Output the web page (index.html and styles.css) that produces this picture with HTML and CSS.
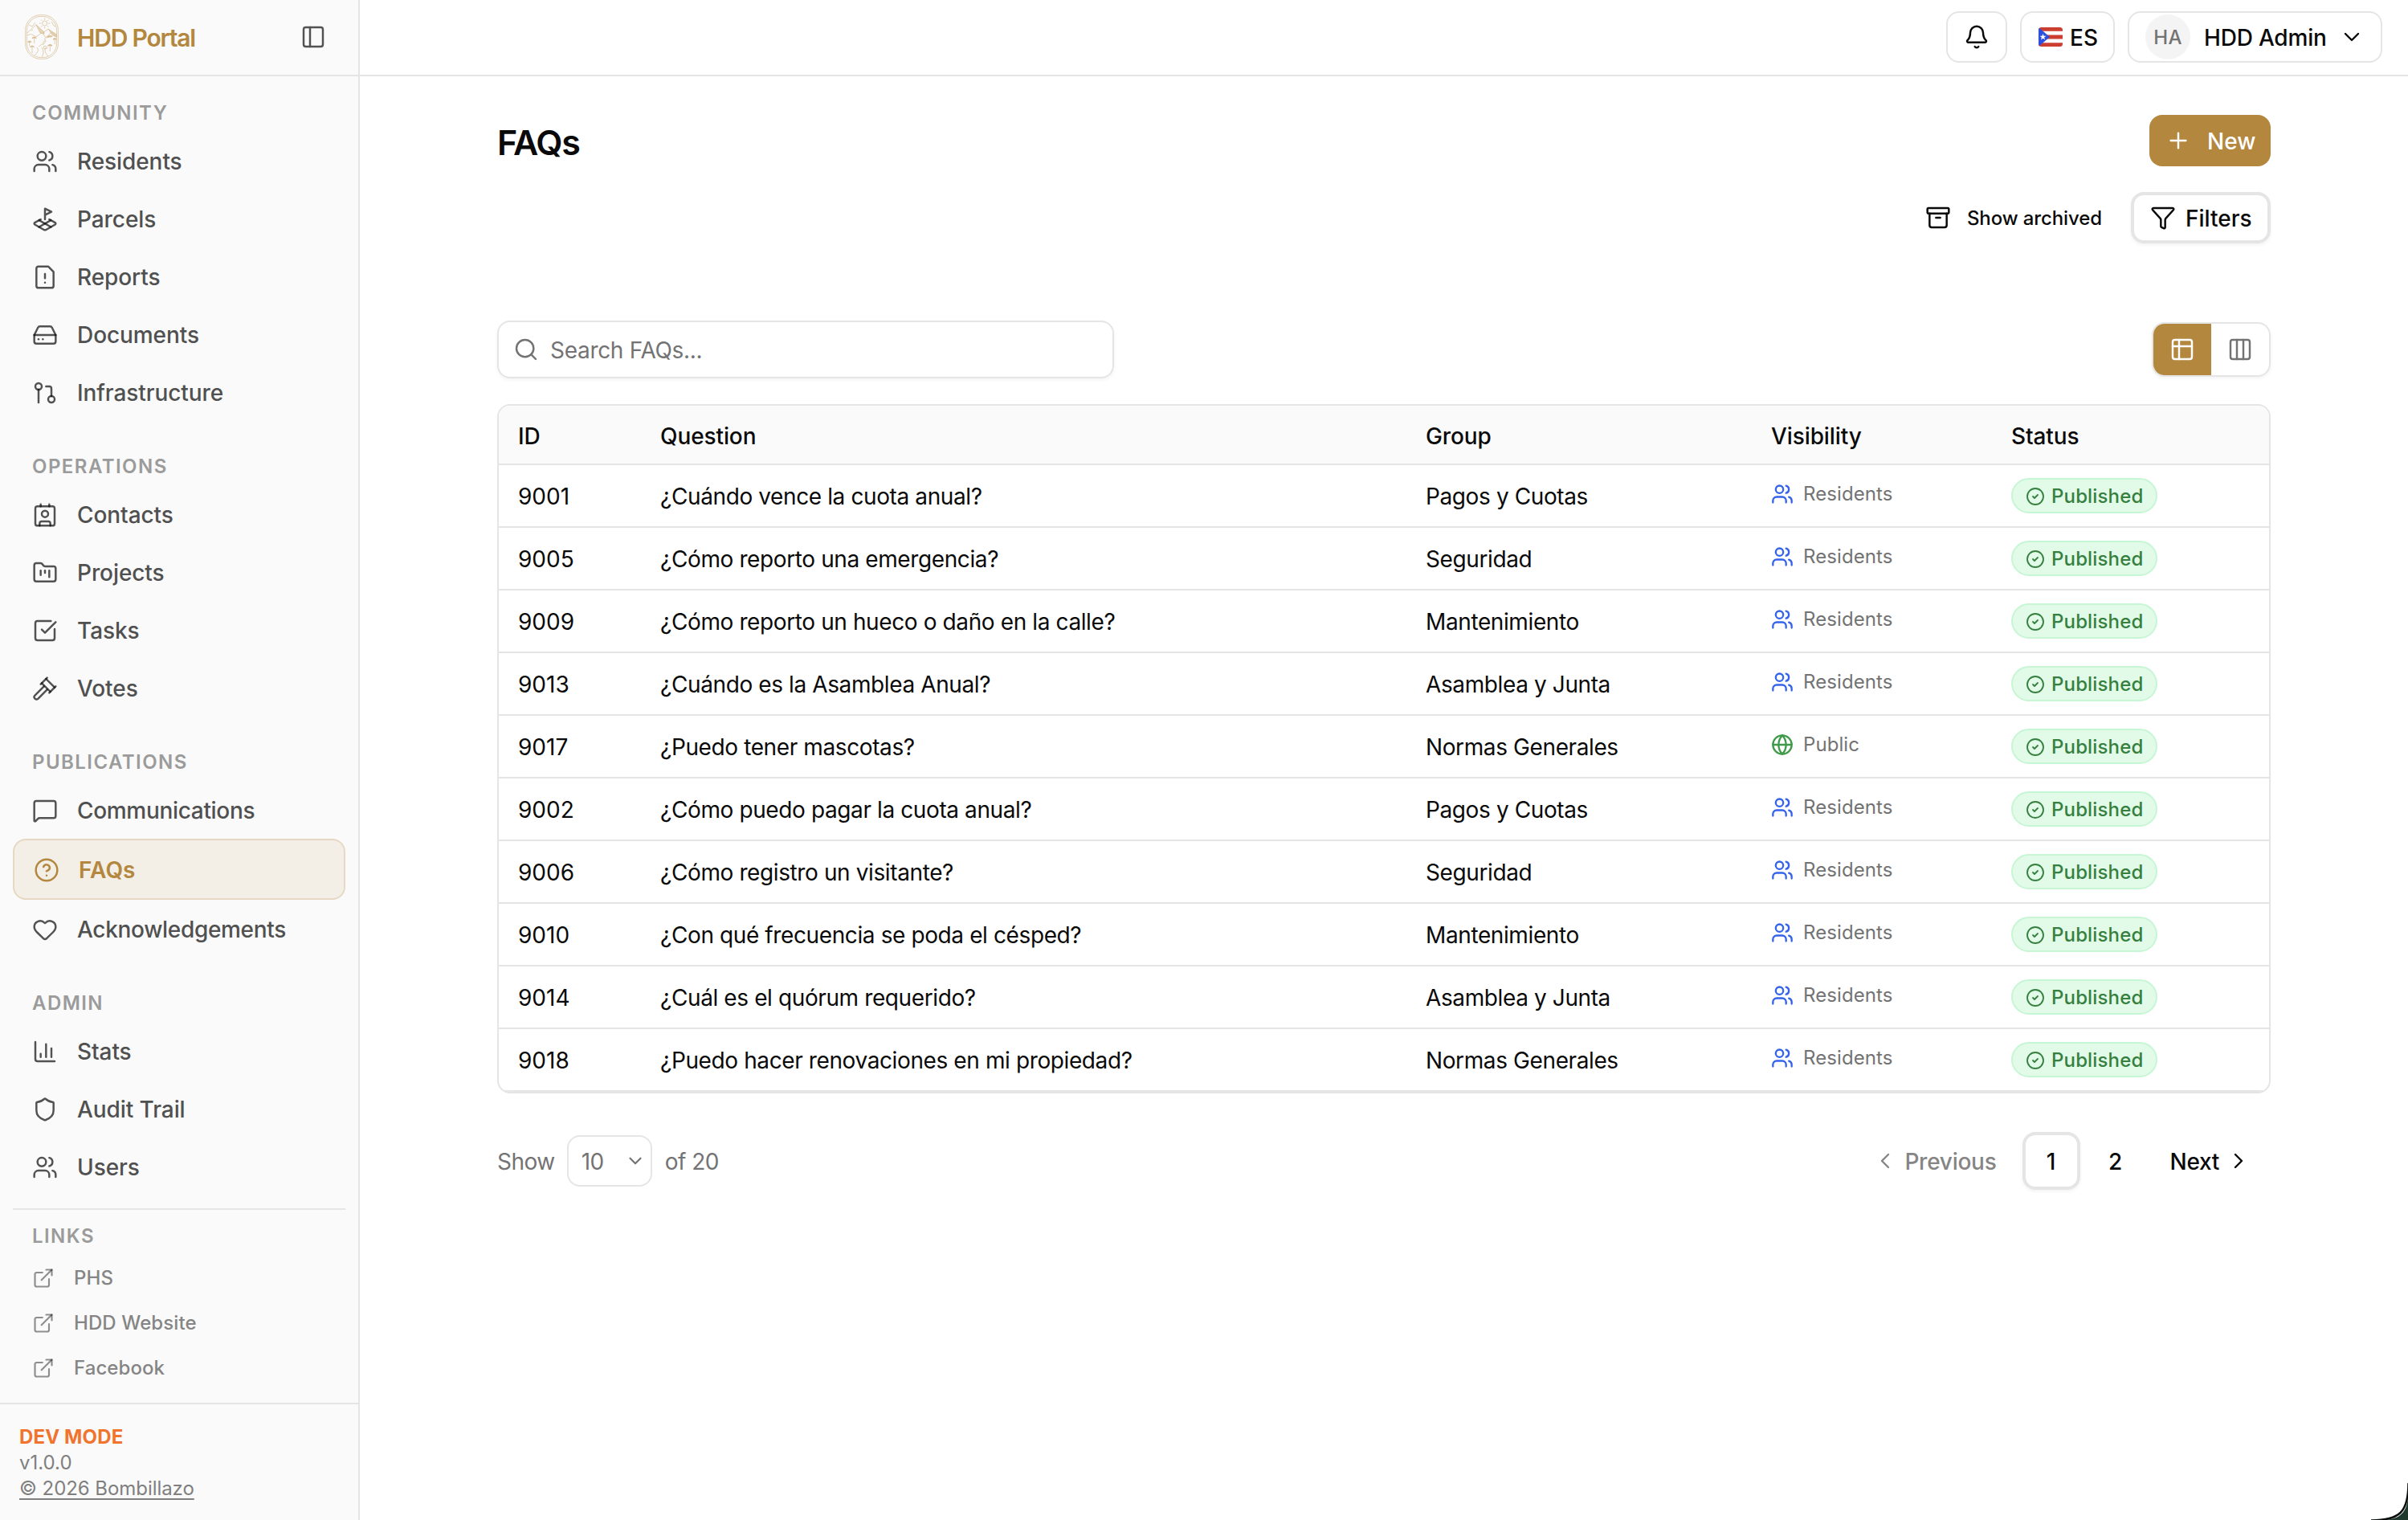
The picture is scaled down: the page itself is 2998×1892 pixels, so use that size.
FILE: index.html
```html
<!DOCTYPE html>
<html lang="en">
<head>
<meta charset="utf-8">
<title>FAQs</title>
<link rel="stylesheet" href="styles.css">
</head>
<body>
<svg class="sprite" aria-hidden="true">
  <symbol id="users" viewBox="0 0 24 24"><path d="M16 21v-2a4 4 0 0 0-4-4H6a4 4 0 0 0-4 4v2"/><circle cx="9" cy="7" r="4"/><path d="M22 21v-2a4 4 0 0 0-3-3.87"/><path d="M16 3.13a4 4 0 0 1 0 7.75"/></symbol>
  <symbol id="land" viewBox="0 0 24 24"><path d="m12 8 6-3-6-3v10"/><path d="m8 11.99-5.5 3.14a1 1 0 0 0 0 1.74l8.5 4.86a2 2 0 0 0 2 0l8.5-4.86a1 1 0 0 0 0-1.74L16 12"/><path d="m6.49 12.85 11.02 6.3"/><path d="M17.51 12.85 6.5 19.15"/></symbol>
  <symbol id="report" viewBox="0 0 24 24"><path d="M15 2H6a2 2 0 0 0-2 2v16a2 2 0 0 0 2 2h12a2 2 0 0 0 2-2V7Z"/><path d="M12 9v4"/><path d="M12 17h.01"/></symbol>
  <symbol id="drive" viewBox="0 0 24 24"><path d="M22 12H2"/><path d="M5.45 5.11 2 12v6a2 2 0 0 0 2 2h16a2 2 0 0 0 2-2v-6l-3.45-6.89A2 2 0 0 0 16.76 4H7.24a2 2 0 0 0-1.79 1.11z"/><path d="M6 16h.01"/><path d="M10 16h.01"/></symbol>
  <symbol id="infra" viewBox="0 0 24 24"><circle cx="18" cy="18" r="3"/><circle cx="6" cy="6" r="3"/><path d="M13 6h3a2 2 0 0 1 2 2v7"/><path d="M6 9v12"/></symbol>
  <symbol id="contact" viewBox="0 0 24 24"><path d="M16 2v2"/><path d="M7 22v-2a2 2 0 0 1 2-2h6a2 2 0 0 1 2 2v2"/><path d="M8 2v2"/><circle cx="12" cy="11" r="3"/><rect x="3" y="4" width="18" height="18" rx="2"/></symbol>
  <symbol id="kanban" viewBox="0 0 24 24"><path d="M4 20h16a2 2 0 0 0 2-2V8a2 2 0 0 0-2-2h-7.93a2 2 0 0 1-1.66-.9l-.82-1.2A2 2 0 0 0 7.93 3H4a2 2 0 0 0-2 2v13c0 1.1.9 2 2 2Z"/><path d="M8 10v4"/><path d="M12 10v2"/><path d="M16 10v6"/></symbol>
  <symbol id="task" viewBox="0 0 24 24"><path d="M21 10.5V19a2 2 0 0 1-2 2H5a2 2 0 0 1-2-2V5a2 2 0 0 1 2-2h12.5"/><path d="m9 11 3 3L22 4"/></symbol>
  <symbol id="gavel" viewBox="0 0 24 24"><path d="m14 13-8.38 8.38a1 1 0 0 1-3.01-3L11 9.99"/><path d="m16 16 6-6"/><path d="m8 8 6-6"/><path d="m9 7 8 8"/><path d="m21 11-8-8"/></symbol>
  <symbol id="message" viewBox="0 0 24 24"><path d="M22 17a2 2 0 0 1-2 2H6.828a2 2 0 0 0-1.414.586l-2.202 2.202A.71.71 0 0 1 2 21.286V5a2 2 0 0 1 2-2h16a2 2 0 0 1 2 2z"/></symbol>
  <symbol id="help" viewBox="0 0 24 24"><circle cx="12" cy="12" r="10"/><path d="M9.09 9a3 3 0 0 1 5.83 1c0 2-3 3-3 3"/><path d="M12 17h.01"/></symbol>
  <symbol id="heart" viewBox="0 0 24 24"><path d="M2 9.5a5.5 5.5 0 0 1 9.591-3.676.56.56 0 0 0 .818 0A5.49 5.49 0 0 1 22 9.5c0 2.29-1.5 4-3 5.5l-5.492 5.313a2 2 0 0 1-3 .019L5 15c-1.5-1.5-3-3.2-3-5.5"/></symbol>
  <symbol id="chart" viewBox="0 0 24 24"><path d="M3 3v16a2 2 0 0 0 2 2h16"/><path d="M18 17V9"/><path d="M13 17V5"/><path d="M8 17v-3"/></symbol>
  <symbol id="shield" viewBox="0 0 24 24"><path d="M20 13c0 5-3.5 7.5-7.66 8.95a1 1 0 0 1-.67-.01C7.5 20.5 4 18 4 13V6a1 1 0 0 1 1-1c2 0 4.5-1.2 6.24-2.72a1.17 1.17 0 0 1 1.52 0C14.51 3.81 17 5 19 5a1 1 0 0 1 1 1z"/></symbol>
  <symbol id="external" viewBox="0 0 24 24"><path d="M15 3h6v6"/><path d="M10 14 21 3"/><path d="M18 13v6a2 2 0 0 1-2 2H5a2 2 0 0 1-2-2V8a2 2 0 0 1 2-2h6"/></symbol>
  <symbol id="panel" viewBox="0 0 24 24"><rect x="3" y="3" width="18" height="18" rx="2"/><path d="M9 3v18"/></symbol>
  <symbol id="bell" viewBox="0 0 24 24"><path d="M10.268 21a2 2 0 0 0 3.464 0"/><path d="M3.262 15.326A1 1 0 0 0 4 17h16a1 1 0 0 0 .74-1.673C19.41 13.956 18 12.499 18 8A6 6 0 0 0 6 8c0 4.499-1.411 5.956-2.738 7.326"/></symbol>
  <symbol id="down" viewBox="0 0 24 24"><path d="m6 9 6 6 6-6"/></symbol>
  <symbol id="left" viewBox="0 0 24 24"><path d="m15 18-6-6 6-6"/></symbol>
  <symbol id="right" viewBox="0 0 24 24"><path d="m9 18 6-6-6-6"/></symbol>
  <symbol id="plus" viewBox="0 0 24 24"><path d="M5 12h14"/><path d="M12 5v14"/></symbol>
  <symbol id="archive" viewBox="0 0 24 24"><rect x="2" y="3" width="20" height="5" rx="1"/><path d="M4 8v11a2 2 0 0 0 2 2h12a2 2 0 0 0 2-2V8"/><path d="M10 12h4"/></symbol>
  <symbol id="funnel" viewBox="0 0 24 24"><path d="M10 20a1 1 0 0 0 .553.895l2 1A1 1 0 0 0 14 21v-7a2 2 0 0 1 .517-1.341L21.74 4.67A1 1 0 0 0 21 3H3a1 1 0 0 0-.742 1.67l7.225 7.989A2 2 0 0 1 10 14z"/></symbol>
  <symbol id="search" viewBox="0 0 24 24"><path d="m21 21-4.34-4.34"/><circle cx="11" cy="11" r="8"/></symbol>
  <symbol id="table" viewBox="0 0 24 24"><rect x="3" y="3" width="18" height="18" rx="2"/><path d="M3 9h18"/><path d="M9 3v18"/></symbol>
  <symbol id="columns" viewBox="0 0 24 24"><rect x="3" y="3" width="18" height="18" rx="2"/><path d="M9 3v18"/><path d="M15 3v18"/></symbol>
  <symbol id="globe" viewBox="0 0 24 24"><circle cx="12" cy="12" r="10"/><path d="M12 2a14.5 14.5 0 0 0 0 20 14.5 14.5 0 0 0 0-20"/><path d="M2 12h20"/></symbol>
  <symbol id="check" viewBox="0 0 24 24"><circle cx="12" cy="12" r="10"/><path d="m9 12 2 2 4-4"/></symbol>
</svg>

<div class="app">
  <aside class="sidebar">
    <div class="brand">
      <svg class="logo" viewBox="0 0 42 56">
        <rect x=".6" y=".6" width="40.8" height="54.8" rx="19"/><rect x="2.400" y="2.400" width="37.200" height="51.200" rx="17.500"/>
        <circle cx="24.700" cy="11" r="3"/>
        <path d="M24.700 4.500v2.500M24.700 15v2.500M18 11h2.500M29 11h2.500M20 6.500l1.700 1.700M29.500 6.500l-1.700 1.700M20 15.500l1.700-1.700M29.500 15.500l-1.700-1.700"/>
        <path class="shade" d="M14 12.700 24 22v2l-5-1-2-4z"/><path class="shade" d="M29 18 39.500 25v3l-5-2z"/>
        <path d="M3 23 14 12.700M22 23l7-5M5 13l4 2 4-5M33 9l3 5 2 1M8 20l2-1"/>
        <path d="M3 26q5-3 8 0t7-1 6 1 6-1 9 3M22 38q6-5 3-7t8-3M17 40q6-3 8-8M12 51q7-6 3-10M21 53q4-6 0-12M29 52q-6-6-3-11M23 40l3-1 2 3-4 1z"/>
        <path d="M11.700 29v7M5.700 34v5M9 40v8M31.300 38v8M37.300 30v7"/>
        <path class="palm" d="M9 29.500l2.700-1.200 2.700 1.200M3.700 34.500l2-1 2.300 1M6.500 40.500 9 39.300l2.500 1.200M28.500 39l2.800-1.300L34 39M35 31l2.300-1 2 1M28 28l3-1.500 3 1"/>
      </svg>
      <span class="brand-name">HDD Portal</span>
      <svg class="icon panel"><use href="#panel"/></svg>
    </div>
    <nav class="nav">
      <section class="group">
        <h2>COMMUNITY</h2>
        <a class="item"><svg class="icon"><use href="#users"/></svg>Residents</a>
        <a class="item"><svg class="icon"><use href="#land"/></svg>Parcels</a>
        <a class="item"><svg class="icon"><use href="#report"/></svg>Reports</a>
        <a class="item"><svg class="icon"><use href="#drive"/></svg>Documents</a>
        <a class="item"><svg class="icon"><use href="#infra"/></svg>Infrastructure</a>
      </section>
      <section class="group">
        <h2>OPERATIONS</h2>
        <a class="item"><svg class="icon"><use href="#contact"/></svg>Contacts</a>
        <a class="item"><svg class="icon"><use href="#kanban"/></svg>Projects</a>
        <a class="item"><svg class="icon"><use href="#task"/></svg>Tasks</a>
        <a class="item"><svg class="icon"><use href="#gavel"/></svg>Votes</a>
      </section>
      <section class="group">
        <h2>PUBLICATIONS</h2>
        <a class="item long"><svg class="icon"><use href="#message"/></svg>Communications</a>
        <a class="item active"><svg class="icon"><use href="#help"/></svg>FAQs</a>
        <a class="item long"><svg class="icon"><use href="#heart"/></svg>Acknowledgements</a>
      </section>
      <section class="group">
        <h2>ADMIN</h2>
        <a class="item"><svg class="icon"><use href="#chart"/></svg>Stats</a>
        <a class="item"><svg class="icon"><use href="#shield"/></svg>Audit Trail</a>
        <a class="item"><svg class="icon"><use href="#users"/></svg>Users</a>
      </section>
    </nav>
    <section class="links">
      <h2>LINKS</h2>
      <a class="link"><svg class="icon"><use href="#external"/></svg>PHS</a>
      <a class="link"><svg class="icon"><use href="#external"/></svg>HDD Website</a>
      <a class="link"><svg class="icon"><use href="#external"/></svg>Facebook</a>
    </section>
    <footer class="foot">
      <strong>DEV MODE</strong>
      <span>v1.0.0</span>
      <a>© 2026 Bombillazo</a>
    </footer>
  </aside>

  <div class="page">
    <header class="topbar">
      <button class="btn bell"><svg class="icon"><use href="#bell"/></svg></button>
      <button class="btn lang">
        <svg class="flag" viewBox="0 0 30 24"><clipPath id="fc"><rect width="30" height="24" rx="3.500"/></clipPath><g clip-path="url(#fc)"><path fill="#fff" d="M0 0h30v24H0z"/><path fill="#cc3f30" d="M0 0h30v4.800H0zM0 9.600h30v4.800H0zM0 19.200h30V24H0z"/><path fill="#2b4fe0" d="M0 0 14 12 0 24z"/><path fill="#fff" d="m5.500 8 1 2.800h3l-2.400 1.800.9 2.900-2.500-1.700L3 15.500l.9-2.900-2.400-1.800h3z"/></g></svg>
        <span>ES</span>
      </button>
      <button class="btn user"><span class="avatar">HA</span><span class="name">HDD Admin</span><svg class="icon"><use href="#down"/></svg></button>
    </header>
    <main class="content">
      <div class="title-row">
        <h1>FAQs</h1>
        <button class="new"><svg class="icon"><use href="#plus"/></svg><span>New</span></button>
      </div>
      <div class="actions">
        <button class="archived"><svg class="icon"><use href="#archive"/></svg><span>Show archived</span></button>
        <button class="filters"><svg class="icon"><use href="#funnel"/></svg><span>Filters</span></button>
      </div>
      <div class="tools">
        <div class="search"><svg class="icon"><use href="#search"/></svg><span>Search FAQs...</span></div>
        <div class="toggle"><button class="on"><svg class="icon"><use href="#table"/></svg></button><button><svg class="icon"><use href="#columns"/></svg></button></div>
      </div>
      <div class="table">
        <div class="row head"><span>ID</span><span>Question</span><span>Group</span><span>Visibility</span><span>Status</span></div>
        <div class="row"><span>9001</span><span class="txt">¿Cuándo vence la cuota anual?</span><span class="txt">Pagos y Cuotas</span><span class="vis"><svg class="icon"><use href="#users"/></svg>Residents</span><span><b class="badge"><svg class="icon"><use href="#check"/></svg>Published</b></span></div>
        <div class="row"><span>9005</span><span class="txt">¿Cómo reporto una emergencia?</span><span class="txt">Seguridad</span><span class="vis"><svg class="icon"><use href="#users"/></svg>Residents</span><span><b class="badge"><svg class="icon"><use href="#check"/></svg>Published</b></span></div>
        <div class="row"><span>9009</span><span class="txt">¿Cómo reporto un hueco o daño en la calle?</span><span class="txt">Mantenimiento</span><span class="vis"><svg class="icon"><use href="#users"/></svg>Residents</span><span><b class="badge"><svg class="icon"><use href="#check"/></svg>Published</b></span></div>
        <div class="row"><span>9013</span><span class="txt">¿Cuándo es la Asamblea Anual?</span><span class="txt">Asamblea y Junta</span><span class="vis"><svg class="icon"><use href="#users"/></svg>Residents</span><span><b class="badge"><svg class="icon"><use href="#check"/></svg>Published</b></span></div>
        <div class="row"><span>9017</span><span class="txt">¿Puedo tener mascotas?</span><span class="txt">Normas Generales</span><span class="vis public"><svg class="icon"><use href="#globe"/></svg>Public</span><span><b class="badge"><svg class="icon"><use href="#check"/></svg>Published</b></span></div>
        <div class="row"><span>9002</span><span class="txt">¿Cómo puedo pagar la cuota anual?</span><span class="txt">Pagos y Cuotas</span><span class="vis"><svg class="icon"><use href="#users"/></svg>Residents</span><span><b class="badge"><svg class="icon"><use href="#check"/></svg>Published</b></span></div>
        <div class="row"><span>9006</span><span class="txt">¿Cómo registro un visitante?</span><span class="txt">Seguridad</span><span class="vis"><svg class="icon"><use href="#users"/></svg>Residents</span><span><b class="badge"><svg class="icon"><use href="#check"/></svg>Published</b></span></div>
        <div class="row"><span>9010</span><span class="txt">¿Con qué frecuencia se poda el césped?</span><span class="txt">Mantenimiento</span><span class="vis"><svg class="icon"><use href="#users"/></svg>Residents</span><span><b class="badge"><svg class="icon"><use href="#check"/></svg>Published</b></span></div>
        <div class="row"><span>9014</span><span class="txt">¿Cuál es el quórum requerido?</span><span class="txt">Asamblea y Junta</span><span class="vis"><svg class="icon"><use href="#users"/></svg>Residents</span><span><b class="badge"><svg class="icon"><use href="#check"/></svg>Published</b></span></div>
        <div class="row"><span>9018</span><span class="txt">¿Puedo hacer renovaciones en mi propiedad?</span><span class="txt">Normas Generales</span><span class="vis"><svg class="icon"><use href="#users"/></svg>Residents</span><span><b class="badge"><svg class="icon"><use href="#check"/></svg>Published</b></span></div>
      </div>
      <div class="pager">
        <div class="size"><span>Show</span><div class="select"><span>10</span><svg class="icon"><use href="#down"/></svg></div><span>of 20</span></div>
        <div class="pages">
          <button class="prev"><svg class="icon"><use href="#left"/></svg><span>Previous</span></button>
          <button class="num current">1</button>
          <button class="num">2</button>
          <button class="next"><span>Next</span><svg class="icon"><use href="#right"/></svg></button>
        </div>
      </div>
    </main>
  </div>
</div>
<svg class="corner" viewBox="0 0 50 50"><path fill="#1f3a2d" d="M50 18v32H18C40 50 50 40 50 18z"/><path fill="none" stroke="#0b0f0d" stroke-width="2.500" d="M50.500 4C50.500 40 40 50.500 4 50.500"/></svg>
</body>
</html>
```
FILE: styles.css
```css
* { box-sizing: border-box; }
body { margin: 0; font-family: Inter, "Liberation Sans", sans-serif; font-size: 28px; line-height: 40px; color: #0a0a0a; background: #fff; overflow: hidden; }
h1, h2 { margin: 0; }
button { font: inherit; font-weight: 500; color: inherit; background: none; border: 0; padding: 0; display: flex; align-items: center; }
span { white-space: nowrap; }
.sprite { display: none; }
.icon { width: 32px; height: 32px; flex: none; fill: none; stroke: currentColor; stroke-width: 1.85; stroke-linecap: round; stroke-linejoin: round; }
.app { display: flex; width: 2998px; height: 1892px; }

.sidebar { width: 448px; flex: none; display: flex; flex-direction: column; background: #fafafa; border-right: 2px solid #e5e5e5; }
.brand { height: 95px; flex: none; display: flex; align-items: center; padding: 0 40px 2px 31px; border-bottom: 2px solid #e5e5e5; }
.logo { width: 42px; height: 56px; fill: none; stroke: #cfae78; stroke-width: .7; opacity: .8; }
.logo .shade { fill: #e2cda8; }
.logo .palm { stroke-width: 1.6; }
.brand-name { margin-left: 23px; padding-top: 2px; font-size: 30px; font-weight: 600; letter-spacing: -1.2px; color: #b3873e; }
.panel { margin-left: auto; color: #525252; }
.nav { display: flex; flex-direction: column; gap: 30px; padding: 20px 16px 0; }
.group { display: flex; flex-direction: column; }
h2 { font-size: 24px; line-height: 48px; padding-top: 2px; font-weight: 600; letter-spacing: 1.45px; color: #9b9b9b; padding-left: 24px; }
.item { display: flex; align-items: center; gap: 24px; height: 72px; padding: 0 24px; font-weight: 500; letter-spacing: -.08px; color: #505050; }
.item.long { letter-spacing: -.32px; }
.item .icon { stroke: rgba(10,10,10,.7); }
.item.active { height: 76px; margin: -1px 0 1px; padding-top: 1px; border: 2px solid #e6d8c3; border-radius: 16px; background: #f3eee6; color: #b3873e; font-weight: 600; letter-spacing: .1px; }
.item.active .icon { stroke: #b3873e; }
.links { margin: 15px 16px 0; border-top: 2px solid #e5e5e5; padding-top: 7px; display: flex; flex-direction: column; }
.links h2 { padding-top: 2px; }
.link { display: flex; align-items: center; gap: 24px; height: 56px; padding: 0 24px; font-size: 24px; font-weight: 500; letter-spacing: .08px; color: #858585; }
.link .icon { width: 28px; height: 28px; stroke: rgba(10,10,10,.45); }
.foot { margin-top: 15px; flex: 1; border-top: 2px solid #e5e5e5; padding: 25px 24px; display: flex; flex-direction: column; align-items: flex-start; font-size: 24px; line-height: 32px; color: #7f7f7f; }
.foot strong { color: #f0742e; font-weight: 700; letter-spacing: .15px; }
.foot a { letter-spacing: -.06px; text-decoration: underline; text-underline-offset: 4px; }

.page { flex: 1; display: flex; flex-direction: column; }
.topbar { height: 95px; flex: none; border-bottom: 2px solid #e5e5e5; display: flex; justify-content: flex-end; gap: 16px; padding: 14px 32px 0; }
.btn { height: 64px; border: 2px solid #e5e5e5; border-radius: 16px; }
.bell { width: 76px; justify-content: center; }
.lang { width: 118px; padding-left: 21px; gap: 9px; }
.btn > span { position: relative; top: 1px; }
.flag { width: 30px; height: 24px; }
.user { width: 317px; padding-left: 20px; }
.btn > .avatar { top: 0; width: 56px; height: 56px; border-radius: 28px; background: #f4f4f4; color: #737373; font-size: 24px; line-height: 57px; letter-spacing: .4px; text-align: center; }
.name { margin-left: 17px; flex: 1; text-align: left; letter-spacing: -.2px; }
.user .icon { margin-right: 20px; }
.content { width: 2208px; margin-left: 171px; display: flex; flex-direction: column; }
.title-row { display: flex; justify-content: space-between; align-items: center; height: 64px; margin-top: 48px; }
h1 { font-size: 43px; font-weight: 600; letter-spacing: -1.3px; padding-top: 3px; }
.new { width: 151px; height: 64px; border-radius: 16px; background: #b3873e; color: #fff; padding-left: 20px; gap: 20px; }
.new span, .filters span { padding-top: 2px; }
.actions { display: flex; justify-content: flex-end; margin-top: 32px; height: 64px; }
.archived { gap: 20px; font-size: 24px; letter-spacing: -.1px; margin-right: 36px; }
.archived span { padding-top: 1px; }
.filters { width: 174px; border: 4px solid #e5e5e5; border-radius: 16px; padding-left: 20px; gap: 12px; box-shadow: 0 2px 4px rgba(0,0,0,.05); }
.tools { display: flex; justify-content: space-between; align-items: center; height: 72px; margin-top: 96px; }
.search { width: 768px; height: 72px; border: 2px solid #e5e5e5; border-radius: 16px; box-shadow: 0 2px 4px rgba(0,0,0,.05); display: flex; align-items: center; padding-left: 18px; gap: 14px; color: #737373; letter-spacing: -.3px; }
.search span { padding-top: 2px; }
.toggle { width: 148px; height: 68px; border: 2px solid #e5e5e5; border-radius: 16px; overflow: hidden; display: flex; box-shadow: 0 2px 4px rgba(0,0,0,.05); }
.toggle button { flex: 1; justify-content: center; color: #737373; }
.toggle .on { background: #b3873e; color: #fff; }
.table { margin-top: 32px; border: 2px solid #e5e5e5; border-radius: 16px; overflow: hidden; }
.row { display: grid; grid-template-columns: 177px 953px 430px 299px 1fr; height: 78px; border-bottom: 2px solid #e5e5e5; align-items: center; }
.row > span { padding-left: 24px; padding-top: 2px; }
.row > span:last-child { padding-top: 0; }
.row > .txt { letter-spacing: -.39px; }
.head { height: 74px; background: #fafafa; font-weight: 500; letter-spacing: -.1px; }
.row.head > span { padding-top: 3px; }
.row > .vis { display: flex; align-items: center; gap: 12px; font-size: 24px; letter-spacing: .08px; color: #737373; padding-top: 0; padding-bottom: 5px; }
.vis .icon { width: 28px; height: 28px; color: #3563e9; stroke-width: 2; }
.public .icon { color: #3f9a4a; }
.badge { display: flex; align-items: center; gap: 8px; width: 182px; height: 44px; padding: 1px 0 0 16px; border: 2px solid #c6f6d3; border-radius: 22px; background: #e2fae8; color: #35803f; font-size: 24px; font-weight: 500; letter-spacing: .15px; }
.badge .icon { width: 24px; height: 24px; }
.pager { display: flex; justify-content: space-between; align-items: center; height: 72px; margin-top: 48px; }
.size { display: flex; align-items: center; color: #737373; letter-spacing: -.5px; }
.size span, .prev span, .next span { padding-top: 2px; }
.select { width: 106px; height: 64px; margin: 0 16px 0 15px; border: 2px solid #e5e5e5; border-radius: 16px; display: flex; align-items: center; justify-content: space-between; padding: 0 6px 0 16px; }
.select .icon { width: 26px; height: 26px; stroke-width: 2; }
.pages { display: flex; align-items: center; }
.prev { color: #858585; gap: 8px; margin-right: 32px; letter-spacing: -.25px; }
.num { width: 72px; height: 72px; padding-top: 2px; justify-content: center; margin-right: 8px; }
.current { border: 4px solid #e5e5e5; border-radius: 16px; box-shadow: 0 2px 4px rgba(0,0,0,.05); }
.next { gap: 8px; padding: 0 24px; margin-left: 0; letter-spacing: -.3px; }
.corner { position: absolute; right: 0; bottom: 0; width: 50px; height: 50px; }
```
